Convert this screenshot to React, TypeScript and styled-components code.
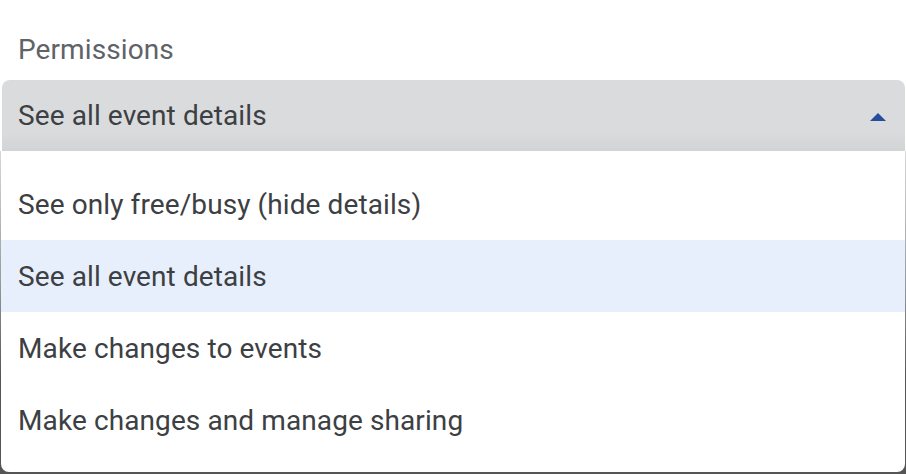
import { FC } from 'react';
import styled, { createGlobalStyle } from 'styled-components';

const options = [
  'See only free/busy (hide details)',
  'See all event details',
  'Make changes to events',
  'Make changes and manage sharing',
];

const selected = 'See all event details';

const GlobalStyle = createGlobalStyle`
  html, body {
    margin: 0;
    padding: 0;
    background: #ffffff;
    font-family: Roboto, 'Liberation Sans', sans-serif;
  }
`;

const App: FC = () => (
  <>
    <GlobalStyle />
    <SPage>
      <SLabel>Permissions</SLabel>
      <SSelect>
        <SValue>{selected}</SValue>
        <SCaret viewBox='0 0 16 8' aria-hidden>
          <path d='M0 8 L8 0 L16 8 Z' />
        </SCaret>
      </SSelect>
      <SBackdrop>
        <SMenu>
          {options.map((option) => (
            <SOption key={option} active={option === selected}>
              {option}
            </SOption>
          ))}
        </SMenu>
      </SBackdrop>
    </SPage>
  </>
);

export default App;

const SPage = styled.div`
  width: 906px;
  height: 474px;
  display: flex;
  flex-direction: column;
  overflow: hidden;
`;

const SLabel = styled.div`
  flex-shrink: 0;
  height: 80px;
  box-sizing: border-box;
  padding: 35px 0 0 18px;
  font-size: 28px;
  line-height: 30px;
  letter-spacing: 0.1px;
  color: #5f6368;
`;

const SSelect = styled.div`
  flex-shrink: 0;
  margin: 0 1px 0 2px;
  height: 71px;
  display: flex;
  align-items: center;
  justify-content: space-between;
  padding: 0 19px 0 16px;
  border-radius: 8px 8px 0 0;
  background: linear-gradient(#dadbdd 0%, #dadbdd 75%, #d2d3d5 100%);
`;

const SValue = styled.span`
  font-size: 28px;
  letter-spacing: 0.1px;
  color: #3c4043;
`;

const SCaret = styled.svg`
  width: 16px;
  height: 8px;
  margin-top: 2px;
  fill: #254d9c;
`;

const SBackdrop = styled.div`
  flex: 1;
  padding: 0 1px 3px 1px;
  background: linear-gradient(#d8d8d8 0%, #9a9a9a 40%, #555555 70%);
`;

const SMenu = styled.div`
  height: 100%;
  box-sizing: border-box;
  padding: 17px 0 16px;
  background: #ffffff;
  border-radius: 0 0 8px 8px;
`;

const SOption = styled.div<{ active?: boolean }>`
  height: 72px;
  display: flex;
  align-items: center;
  padding-left: 17px;
  font-size: 28px;
  letter-spacing: 0.1px;
  color: #3c4043;
  background: ${({ active }) => (active ? '#e8effc' : 'transparent')};
`;
